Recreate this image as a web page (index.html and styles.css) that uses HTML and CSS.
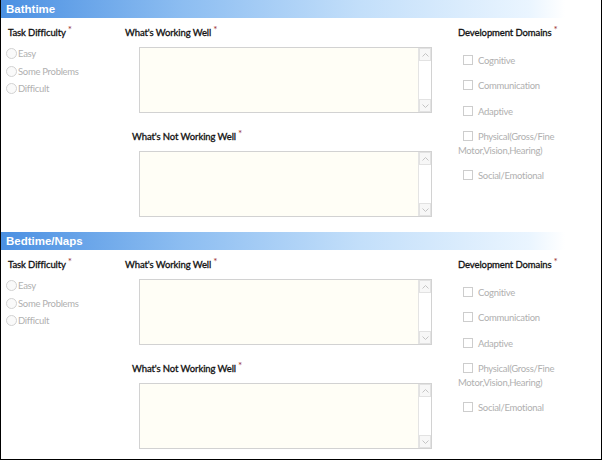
FILE: index.html
```html
<!DOCTYPE html>
<html lang="en">

<head>
    <meta charset="UTF-8">
    <meta name="viewport" content="width=device-width, initial-scale=1.0">
    <title>Daily Routines</title>
    <link rel="stylesheet" href="styles.css">
</head>

<body>

    <div class="page">

        <!-- Bathtime -->
        <div class="routine">
            <div class="routine-header">Bathtime</div>
            <div class="routine-body">
                <div class="col col-difficulty">
                    <div class="field-label">Task Difficulty<span class="req">*</span></div>
                    <div class="options">
                        <label class="radio-row"><span class="radio"></span>Easy</label>
                        <label class="radio-row"><span class="radio"></span>Some Problems</label>
                        <label class="radio-row"><span class="radio"></span>Difficult</label>
                    </div>
                </div>
                <div class="col col-notes">
                    <div class="field-label">What's Working Well<span class="req">*</span></div>
                    <div class="note-box">
                        <textarea disabled></textarea>
                        <div class="scrollbar">
                            <span class="scroll-btn"><svg width="7" height="4" viewBox="0 0 7 4"><path d="M0.5 3.5L3.5 0.5L6.5 3.5" fill="none" stroke="#c4c4c4"/></svg></span>
                            <span class="scroll-btn"><svg width="7" height="4" viewBox="0 0 7 4"><path d="M0.5 0.5L3.5 3.5L6.5 0.5" fill="none" stroke="#c4c4c4"/></svg></span>
                        </div>
                    </div>
                    <div class="field-label second">What's Not Working Well<span class="req">*</span></div>
                    <div class="note-box">
                        <textarea disabled></textarea>
                        <div class="scrollbar">
                            <span class="scroll-btn"><svg width="7" height="4" viewBox="0 0 7 4"><path d="M0.5 3.5L3.5 0.5L6.5 3.5" fill="none" stroke="#c4c4c4"/></svg></span>
                            <span class="scroll-btn"><svg width="7" height="4" viewBox="0 0 7 4"><path d="M0.5 0.5L3.5 3.5L6.5 0.5" fill="none" stroke="#c4c4c4"/></svg></span>
                        </div>
                    </div>
                </div>
                <div class="col col-domains">
                    <div class="field-label">Development Domains<span class="req">*</span></div>
                    <div class="domains">
                        <div class="check-row"><span class="check"></span>Cognitive</div>
                        <div class="check-row"><span class="check"></span>Communication</div>
                        <div class="check-row"><span class="check"></span>Adaptive</div>
                        <div class="check-row"><span class="check"></span>Physical(Gross/Fine Motor,Vision,Hearing)</div>
                        <div class="check-row"><span class="check"></span>Social/Emotional</div>
                    </div>
                </div>
            </div>
        </div>

        <!-- Bedtime/Naps -->
        <div class="routine">
            <div class="routine-header">Bedtime/Naps</div>
            <div class="routine-body">
                <div class="col col-difficulty">
                    <div class="field-label">Task Difficulty<span class="req">*</span></div>
                    <div class="options">
                        <label class="radio-row"><span class="radio"></span>Easy</label>
                        <label class="radio-row"><span class="radio"></span>Some Problems</label>
                        <label class="radio-row"><span class="radio"></span>Difficult</label>
                    </div>
                </div>
                <div class="col col-notes">
                    <div class="field-label">What's Working Well<span class="req">*</span></div>
                    <div class="note-box">
                        <textarea disabled></textarea>
                        <div class="scrollbar">
                            <span class="scroll-btn"><svg width="7" height="4" viewBox="0 0 7 4"><path d="M0.5 3.5L3.5 0.5L6.5 3.5" fill="none" stroke="#c4c4c4"/></svg></span>
                            <span class="scroll-btn"><svg width="7" height="4" viewBox="0 0 7 4"><path d="M0.5 0.5L3.5 3.5L6.5 0.5" fill="none" stroke="#c4c4c4"/></svg></span>
                        </div>
                    </div>
                    <div class="field-label second">What's Not Working Well<span class="req">*</span></div>
                    <div class="note-box">
                        <textarea disabled></textarea>
                        <div class="scrollbar">
                            <span class="scroll-btn"><svg width="7" height="4" viewBox="0 0 7 4"><path d="M0.5 3.5L3.5 0.5L6.5 3.5" fill="none" stroke="#c4c4c4"/></svg></span>
                            <span class="scroll-btn"><svg width="7" height="4" viewBox="0 0 7 4"><path d="M0.5 0.5L3.5 3.5L6.5 0.5" fill="none" stroke="#c4c4c4"/></svg></span>
                        </div>
                    </div>
                </div>
                <div class="col col-domains">
                    <div class="field-label">Development Domains<span class="req">*</span></div>
                    <div class="domains">
                        <div class="check-row"><span class="check"></span>Cognitive</div>
                        <div class="check-row"><span class="check"></span>Communication</div>
                        <div class="check-row"><span class="check"></span>Adaptive</div>
                        <div class="check-row"><span class="check"></span>Physical(Gross/Fine Motor,Vision,Hearing)</div>
                        <div class="check-row"><span class="check"></span>Social/Emotional</div>
                    </div>
                </div>
            </div>
        </div>

    </div>

</body>

</html>
```

FILE: styles.css
```css
/* General Reset */
* {
    margin: 0;
    padding: 0;
    box-sizing: border-box;
}

body {
    font-family: Lato, "Liberation Sans", Arial, sans-serif;
    font-size: 9.5px;
    letter-spacing: -0.3px;
    color: #222;
    background-color: #fff;
}

.page {
    width: 602px;
    height: 460px;
    border: 1px solid #000;
    border-top: none;
    overflow: hidden;
}

/* Section header bar */
.routine-header {
    height: 18px;
    line-height: 18px;
    padding-left: 5px;
    font-family: "Liberation Sans", Arial, sans-serif;
    font-size: 11.5px;
    font-weight: bold;
    letter-spacing: 0;
    color: #fff;
    background: linear-gradient(to right, #4b90e2 0%, #8cbdf1 30%, #c3dffa 60%, #eaf5ff 88%, #fff 94%);
}

.routine-body {
    display: grid;
    grid-template-columns: 119px 333px 1fr;
    padding: 7px 0 15px 5px;
}

.field-label {
    height: 14px;
    line-height: 14px;
    letter-spacing: -0.1px;
    color: #111;
    white-space: nowrap;
    -webkit-text-stroke: 0.3px #111;
}

.req {
    position: relative;
    top: -3px;
    margin-left: 2px;
    font-size: 10px;
    color: #9c3434;
    -webkit-text-stroke: 0;
}

/* Task difficulty */
.col-difficulty .field-label {
    padding-left: 2px;
}

.options {
    margin-top: 6px;
}

.radio-row {
    display: flex;
    align-items: center;
    height: 17.5px;
    color: #b0b0b0;
}

.radio {
    width: 11px;
    height: 11px;
    border: 1px solid #d2d2d2;
    border-radius: 50%;
    margin-right: 1px;
    background-color: #fafafa;
}

/* Notes */
.note-box {
    display: flex;
    width: 293px;
    height: 66px;
    margin: 8px 0 0 14px;
    border: 1px solid #d2d2d2;
    background-color: #fffef6;
}

.note-box textarea {
    flex: 1;
    border: none;
    resize: none;
    background-color: transparent;
}

.scrollbar {
    width: 13px;
    display: flex;
    flex-direction: column;
    justify-content: space-between;
    border-left: 1px solid #e4e4e4;
    background-color: #fff;
}

.scroll-btn {
    height: 13px;
    display: flex;
    align-items: center;
    justify-content: center;
    border: 1px solid #e2e2e2;
    background-color: #f7f7f7;
}

.field-label.second {
    margin-top: 16px;
    padding-left: 7px;
}

/* Domains */
.domains {
    margin-top: 15px;
    padding-right: 8px;
}

.check-row {
    line-height: 14px;
    margin-bottom: 11.3px;
    color: #b0b0b0;
}

.check {
    display: inline-block;
    width: 10px;
    height: 10px;
    border: 1px solid #cdcdcd;
    margin: 0 5px 0 5px;
    vertical-align: -1px;
}
```
